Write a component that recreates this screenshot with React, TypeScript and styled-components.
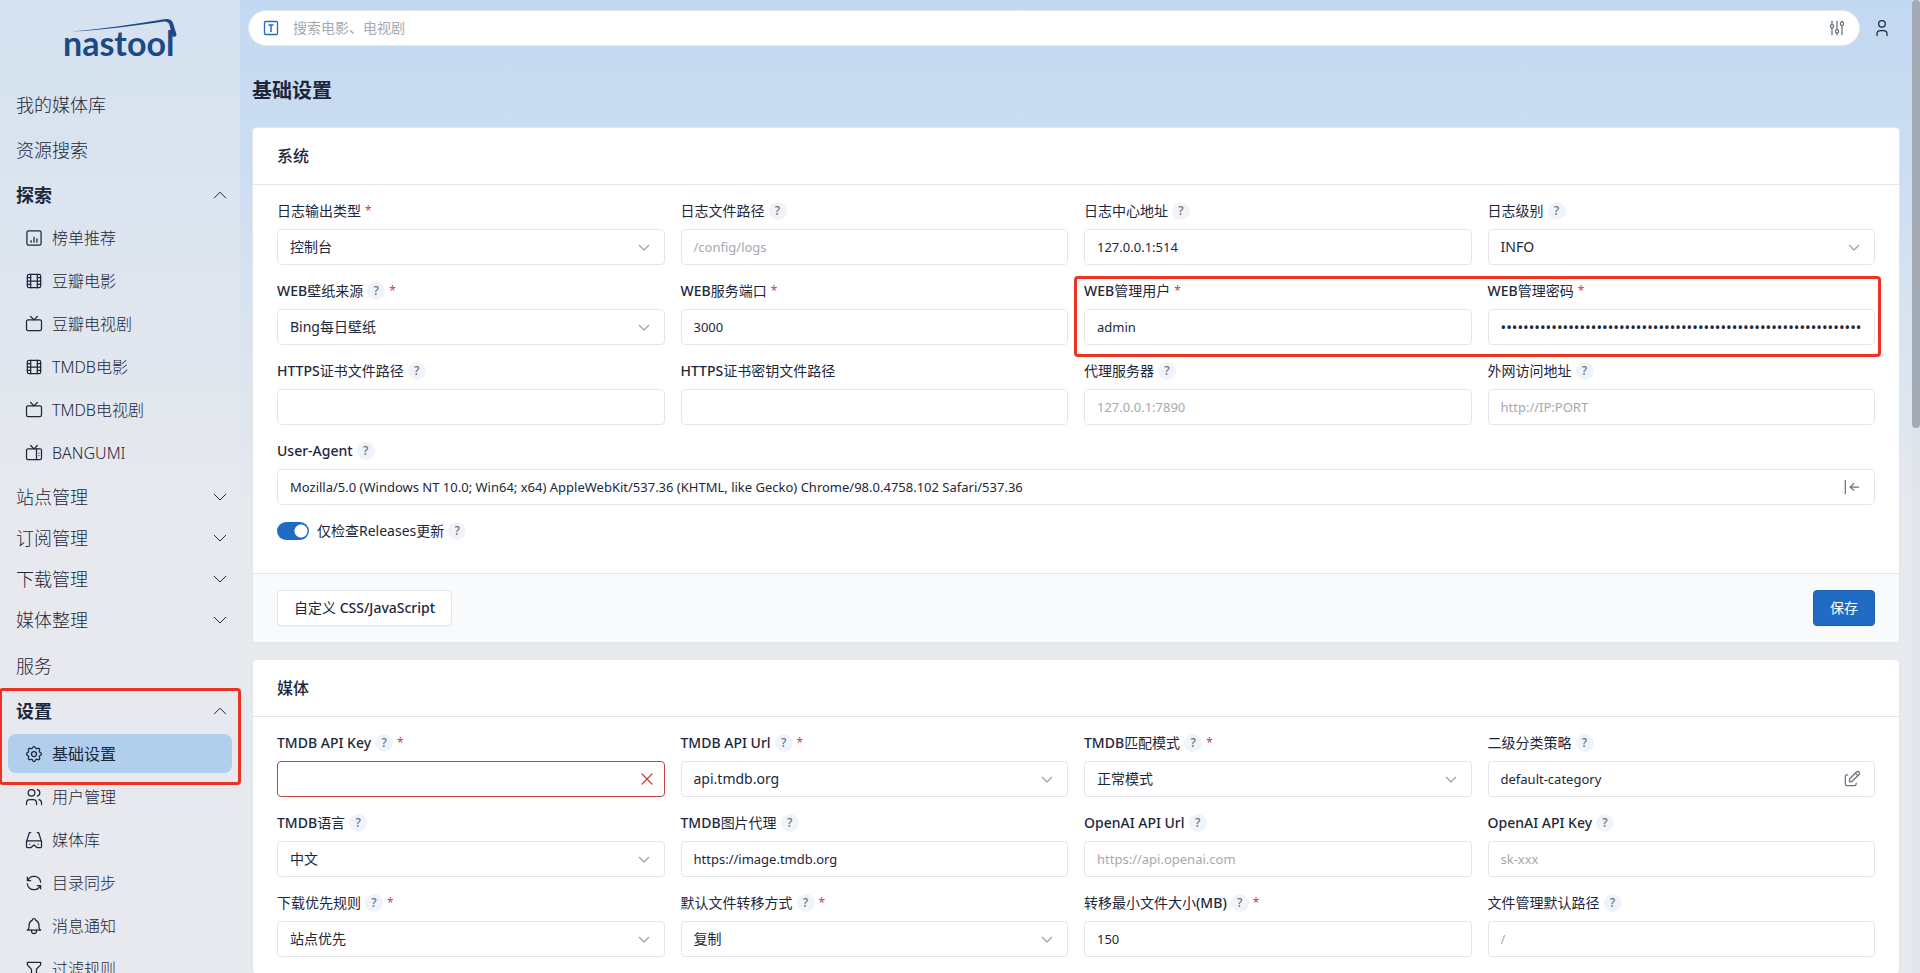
import React from "react";
import styled, { createGlobalStyle, css } from "styled-components";
import type { IconType } from "react-icons";
import {
  TbAdjustments,
  TbArrowBarToLeft,
  TbBell,
  TbDeviceTv,
  TbDeviceTvOld,
  TbEdit,
  TbFilter,
  TbMovie,
  TbRefresh,
  TbSettings,
  TbUser,
  TbUsers,
  TbX,
} from "react-icons/tb";

const color = {
  text: "#1d273b",
  muted: "#667382",
  placeholder: "#a5a9b1",
  border: "#e4e6ea",
  primary: "#206bc4",
  danger: "#c8433f",
  mark: "#ea3323",
};

const GlobalStyle = createGlobalStyle`
  *, *::before, *::after { box-sizing: border-box; }
  body {
    margin: 0;
    color: ${color.text};
    font-family: "Noto Sans", "Noto Sans CJK SC", sans-serif;
    font-size: 14px;
    line-height: 20px;
  }
  button, input, select { font: inherit; color: inherit; }
  h1, h2, ul { margin: 0; padding: 0; }
  ul { list-style: none; }
  a { color: inherit; text-decoration: none; }
`;

const Shell = styled.div`
  display: grid;
  grid-template-columns: 240px minmax(0, 1fr) 8px;
  grid-template-rows: minmax(0, 1fr);
  height: 100vh;
  overflow: hidden;
  background: linear-gradient(180deg, #c2d9f2 0%, #cbddf1 15%, #e6e9ee 52%);
`;

/* Sidebar */

const Sidebar = styled.aside`
  position: relative;
  z-index: 1;
  background: rgba(231, 234, 238, 0.5);
`;

const Brand = styled.a`
  display: flex;
  justify-content: center;
  height: 82px;
  padding-top: 16px;
`;

const Nav = styled.nav`
  display: flex;
  flex-direction: column;
`;

const rowBase = css`
  display: flex;
  align-items: center;
  width: 100%;
  border: 0;
  background: none;
  text-align: left;
`;

const TopLink = styled.a`
  ${rowBase}
  height: 45px;
  padding: 0 16px;
  font-size: 18px;
  font-weight: 300;
`;

const GroupButton = styled.button<{ $open?: boolean }>`
  ${rowBase}
  justify-content: space-between;
  height: ${(p) => (p.$open ? 45 : 41)}px;
  padding: 0 13px 0 16px;
  font-size: 18px;
  font-weight: ${(p) => (p.$open ? 700 : 300)};
`;

const ClosedGroups = styled.div`
  padding: 1px 0 3px;
`;

const SubList = styled.ul`
  display: flex;
  flex-direction: column;
  gap: 4px;
  padding: 1px 8px 3px;
`;

const SubLink = styled.a<{ $active?: boolean }>`
  display: flex;
  align-items: center;
  gap: 8px;
  height: 39px;
  padding: 0 16px;
  border-radius: 8px;
  font-size: 16px;
  font-weight: ${(p) => (p.$active ? 400 : 300)};
  background: ${(p) => (p.$active ? "#b1cfec" : "transparent")};
`;

const OpenGroup = styled.section`
  position: relative;
`;

const Mark = styled.div<{ $box: string; $height?: string }>`
  position: absolute;
  inset: ${(p) => p.$box};
  height: ${(p) => p.$height ?? "auto"};
  border: 3px solid ${color.mark};
  border-radius: 4px;
  pointer-events: none;
`;

/* Main column */

const Main = styled.main`
  min-width: 0;
  overflow-y: auto;
  scrollbar-width: none;
`;

const TopBar = styled.header`
  display: flex;
  align-items: center;
  gap: 12px;
  padding: 10px 20px 0 8px;
`;

const SearchBox = styled.label`
  display: flex;
  flex: 1;
  align-items: center;
  gap: 12px;
  height: 36px;
  padding: 0 12px;
  border: 1px solid ${color.border};
  border-radius: 18px;
  background: #fff;
`;

const SearchInput = styled.input`
  flex: 1;
  min-width: 0;
  padding: 0;
  border: 0;
  outline: 0;
  background: none;
  &::placeholder { color: ${color.placeholder}; opacity: 1; }
`;

const IconButton = styled.button`
  display: flex;
  padding: 0;
  border: 0;
  background: none;
  color: ${(p) => p.color ?? color.text};
`;

const PageTitle = styled.h1`
  padding: 31px 12px 22px;
  font-size: 20px;
  line-height: 28px;
  font-weight: 700;
`;

const Cards = styled.div`
  display: flex;
  flex-direction: column;
  gap: 16px;
  padding: 0 12px 16px;
`;

const Card = styled.form`
  border: 1px solid ${color.border};
  border-radius: 4px;
  background: #fff;
`;

const CardTitle = styled.h2`
  padding: 16px 24px;
  border-bottom: 1px solid ${color.border};
  font-size: 16px;
  line-height: 24px;
  font-weight: 500;
`;

const CardBody = styled.div`
  display: grid;
  grid-template-columns: repeat(4, minmax(0, 1fr));
  gap: 16px;
  padding: 16px 24px;
`;

const Pair = styled.div`
  position: relative;
  display: grid;
  grid-column: span 2;
  grid-template-columns: subgrid;
`;

const CardFooter = styled.div`
  display: flex;
  justify-content: space-between;
  margin-top: 16px;
  padding: 16px 24px;
  border-top: 1px solid ${color.border};
  border-radius: 0 0 4px 4px;
  background: #f8fafc;
`;

const Button = styled.button<{ $primary?: boolean }>`
  height: 36px;
  padding: 0 16px;
  border: 1px solid ${(p) => (p.$primary ? "#1c60b0" : color.border)};
  border-radius: 4px;
  background: ${(p) => (p.$primary ? color.primary : "#fff")};
  color: ${(p) => (p.$primary ? "#fff" : color.text)};
  box-shadow: 0 1px 0 rgba(29, 39, 59, 0.04);
`;

const FieldBox = styled.div<{ $wide?: boolean }>`
  grid-column: ${(p) => (p.$wide ? "1 / -1" : "auto")};
  min-width: 0;
`;

const LabelRow = styled.div`
  display: flex;
  align-items: center;
  height: 20px;
  margin-bottom: 8px;
`;

const Medium = styled.span`
  font-weight: 500;
`;

const Help = styled.span`
  width: 18px;
  height: 18px;
  margin-left: 4px;
  border-radius: 50%;
  background: #f0f4f9;
  color: ${color.muted};
  font-size: 12px;
  line-height: 18px;
  font-weight: 500;
  text-align: center;
`;

const Star = styled.span`
  margin-left: 4px;
  color: ${color.danger};
  font-size: 12px;
  line-height: 18px;
`;

const Control = styled.div`
  position: relative;
`;

const controlStyle = css<{ $invalid?: boolean }>`
  display: block;
  width: 100%;
  height: 36px;
  padding: 0 12px;
  border: 1px solid ${(p) => (p.$invalid ? color.danger : color.border)};
  border-radius: 4px;
  outline: 0;
  background: #fff;
`;

const TextInput = styled.input<{ $invalid?: boolean }>`
  ${controlStyle}
  font-size: ${(p) => (p.type === "password" ? 15 : 13)}px;
  &::placeholder { color: ${color.placeholder}; opacity: 1; }
`;

const Select = styled.select<{ $invalid?: boolean }>`
  ${controlStyle}
  appearance: none;
`;

const Trailing = styled.span`
  position: absolute;
  top: 0;
  right: 13px;
  display: flex;
  align-items: center;
  height: 36px;
  pointer-events: none;
`;

const InvalidMark = styled(Trailing)`
  right: 8px;
`;

const SwitchRow = styled.div`
  display: flex;
  grid-column: 1 / -1;
  align-items: center;
  height: 20px;
`;

const Switch = styled.input`
  width: 32px;
  height: 18px;
  margin: 0 8px 0 0;
  border-radius: 9px;
  appearance: none;
  background: radial-gradient(circle at 24px 9px, #fff 6px, ${color.primary} 7px);
`;

const Track = styled.div`
  background: rgba(220, 224, 230, 0.4);
`;

const Thumb = styled.div`
  height: 44%;
  border-radius: 4px;
  background: #a3abb7;
`;

/* Drawings */

const Logo = () => (
  <svg width="116" height="48" viewBox="0 0 116 48" role="img" aria-label="nastool">
    <path
      d="M9 15.6C40 13 75 8 102 3.2Q109 2 111 7L114.5 18.5Q114.500 21.500 110.500 20.500L107.500 9Q106.500 5.200 102 5.400C75 9.500 40 14 9 15.600Z"
      fill="#1b4a86"
    />
    <text x="1" y="40" fontFamily="Lato" fontWeight="700" fontSize="34" fill="#1b4a86">
      nastool
    </text>
  </svg>
);

const GroupChevron = ({ open }: { open?: boolean }) => (
  <svg width="14" height="8" viewBox="0 0 14 8" fill="none" stroke={color.text} strokeWidth="1">
    <path d={open ? "M1 7.2 7 1.2l6 6" : "M1 1l6 6 6-6"} />
  </svg>
);

const SelectChevron = () => (
  <svg width="16" height="16" viewBox="0 0 16 16" fill="none" stroke="#a5a9b1" strokeWidth="1.5">
    <path d="M3 6l5 5 5-5" />
  </svg>
);

const ChartSquare: IconType = ({ size = 20 }) => (
  <svg
    width={size}
    height={size}
    viewBox="0 0 24 24"
    fill="none"
    stroke="currentColor"
    strokeWidth="1.5"
    strokeLinecap="round"
  >
    <rect x="3.5" y="3.5" width="17" height="17" rx="2" />
    <path d="M8.5 15v2M12 11v6M15.5 13v4" />
  </svg>
);

const StereoGlasses: IconType = ({ size = 20 }) => (
  <svg
    width={size}
    height={size}
    viewBox="0 0 24 24"
    fill="none"
    stroke="currentColor"
    strokeWidth="1.5"
    strokeLinecap="round"
    strokeLinejoin="round"
  >
    <path d="M8 3H6.500L3 14M16 3h1.500L21 14" />
    <path d="M3 14v6a1 1 0 0 0 1 1h4.500L12 18l3.500 3H20a1 1 0 0 0 1-1v-6a1 1 0 0 0-1-1H4a1 1 0 0 0-1 1Z" />
    <path d="M7 17h.01M17 17h.01" />
  </svg>
);

const LetterSquare = () => (
  <svg width="20" height="20" viewBox="0 0 20 20" fill="none" stroke={color.primary}>
    <rect x="3.500" y="3.500" width="13" height="13" rx="1" strokeWidth="1.3" />
    <path d="M7.500 7h5M10 7v7" strokeWidth="1.5" />
  </svg>
);

/* Data */

type SubItem = [string, IconType];

const explore: SubItem[] = [
  ["榜单推荐", ChartSquare],
  ["豆瓣电影", TbMovie],
  ["豆瓣电视剧", TbDeviceTv],
  ["TMDB电影", TbMovie],
  ["TMDB电视剧", TbDeviceTv],
  ["BANGUMI", TbDeviceTvOld],
];

const settings: SubItem[] = [
  ["基础设置", TbSettings],
  ["用户管理", TbUsers],
  ["媒体库", StereoGlasses],
  ["目录同步", TbRefresh],
  ["消息通知", TbBell],
  ["过滤规则", TbFilter],
];

const closedGroups = ["站点管理", "订阅管理", "下载管理", "媒体整理"];

/* Latin words are set in medium weight, Chinese characters in regular. */
const Label = ({ text }: { text: string }) => (
  <>
    {text
      .split(/([\x20-\x7e]+)/)
      .filter(Boolean)
      .map((part, i) => (/^[\x20-\x7e]/.test(part) ? <Medium key={i}>{part}</Medium> : part))}
  </>
);

interface FieldProps {
  id: string;
  label: string;
  help?: boolean;
  required?: boolean;
  select?: boolean;
  value?: string;
  placeholder?: string;
  type?: string;
  wide?: boolean;
  invalid?: boolean;
  icon?: React.ReactNode;
}

const Field = (p: FieldProps) => (
  <FieldBox $wide={p.wide}>
    <LabelRow>
      <label htmlFor={p.id}>
        <Label text={p.label} />
      </label>
      {p.help && <Help>?</Help>}
      {p.required && <Star>*</Star>}
    </LabelRow>
    <Control>
      {p.select ? (
        <Select id={p.id}>
          <option>{p.value}</option>
        </Select>
      ) : (
        <TextInput
          id={p.id}
          type={p.type ?? "text"}
          defaultValue={p.value}
          placeholder={p.placeholder}
          autoComplete="off"
          $invalid={p.invalid}
        />
      )}
      {p.select && (
        <Trailing>
          <SelectChevron />
        </Trailing>
      )}
      {p.icon && <Trailing>{p.icon}</Trailing>}
      {p.invalid && (
        <InvalidMark>
          <TbX size={20} strokeWidth={1.5} color={color.danger} />
        </InvalidMark>
      )}
    </Control>
  </FieldBox>
);

const SubItems = ({ items, active }: { items: SubItem[]; active?: string }) => (
  <SubList>
    {items.map(([name, Icon]) => (
      <li key={name}>
        <SubLink href="#" $active={name === active}>
          <Icon size={20} strokeWidth={1.5} />
          {name}
        </SubLink>
      </li>
    ))}
  </SubList>
);

export default function App() {
  return (
    <>
      <GlobalStyle />
      <Shell>
        <Sidebar>
          <Brand href="#">
            <Logo />
          </Brand>
          <Nav>
            <TopLink href="#">我的媒体库</TopLink>
            <TopLink href="#">资源搜索</TopLink>
            <OpenGroup>
              <GroupButton $open>
                探索
                <GroupChevron open />
              </GroupButton>
              <SubItems items={explore} />
            </OpenGroup>
            <ClosedGroups>
              {closedGroups.map((name) => (
                <GroupButton key={name}>
                  {name}
                  <GroupChevron />
                </GroupButton>
              ))}
            </ClosedGroups>
            <TopLink href="#">服务</TopLink>
            <OpenGroup>
              <GroupButton $open>
                设置
                <GroupChevron open />
              </GroupButton>
              <SubItems items={settings} active="基础设置" />
              <Mark $box="0 -1px auto -1px" $height="97px" />
            </OpenGroup>
          </Nav>
        </Sidebar>

        <Main>
          <TopBar>
            <SearchBox>
              <LetterSquare />
              <SearchInput type="text" placeholder="搜索电影、电视剧" aria-label="搜索电影、电视剧" />
              <IconButton type="button" aria-label="筛选" color={color.muted}>
                <TbAdjustments size={20} strokeWidth={1.5} />
              </IconButton>
            </SearchBox>
            <IconButton type="button" aria-label="用户">
              <TbUser size={20} strokeWidth={1.5} />
            </IconButton>
          </TopBar>
          <PageTitle>基础设置</PageTitle>
          <Cards>
            <Card>
              <CardTitle>系统</CardTitle>
              <CardBody>
                <Field id="log-type" label="日志输出类型" required select value="控制台" />
                <Field id="log-path" label="日志文件路径" help placeholder="/config/logs" />
                <Field id="log-server" label="日志中心地址" help value="127.0.0.1:514" />
                <Field id="log-level" label="日志级别" help select value="INFO" />
                <Field id="wallpaper" label="WEB壁纸来源" help required select value="Bing每日壁纸" />
                <Field id="web-port" label="WEB服务端口" required value="3000" />
                <Pair>
                  <Field id="web-user" label="WEB管理用户" required value="admin" />
                  <Field
                    id="web-password"
                    label="WEB管理密码"
                    required
                    type="password"
                    value={"p".repeat(94)}
                  />
                  <Mark $box="-5px -6px -12px -10px" />
                </Pair>
                <Field id="ssl-cert" label="HTTPS证书文件路径" help />
                <Field id="ssl-key" label="HTTPS证书密钥文件路径" />
                <Field id="proxy" label="代理服务器" help placeholder="127.0.0.1:7890" />
                <Field id="domain" label="外网访问地址" help placeholder="http://IP:PORT" />
                <Field
                  id="user-agent"
                  label="User-Agent"
                  help
                  wide
                  value="Mozilla/5.0 (Windows NT 10.0; Win64; x64) AppleWebKit/537.36 (KHTML, like Gecko) Chrome/98.0.4758.102 Safari/537.36"
                  icon={<TbArrowBarToLeft size={20} strokeWidth={1.5} color={color.muted} />}
                />
                <SwitchRow>
                  <Switch id="releases" type="checkbox" defaultChecked />
                  <label htmlFor="releases">仅检查Releases更新</label>
                  <Help>?</Help>
                </SwitchRow>
              </CardBody>
              <CardFooter>
                <Button type="button">
                  <Label text="自定义 CSS/JavaScript" />
                </Button>
                <Button type="button" $primary>
                  保存
                </Button>
              </CardFooter>
            </Card>

            <Card>
              <CardTitle>媒体</CardTitle>
              <CardBody>
                <Field id="tmdb-key" label="TMDB API Key" help required invalid />
                <Field id="tmdb-url" label="TMDB API Url" help required select value="api.tmdb.org" />
                <Field id="tmdb-match" label="TMDB匹配模式" help required select value="正常模式" />
                <Field
                  id="category"
                  label="二级分类策略"
                  help
                  value="default-category"
                  icon={<TbEdit size={20} strokeWidth={1.5} color={color.muted} />}
                />
                <Field id="tmdb-lang" label="TMDB语言" help select value="中文" />
                <Field id="tmdb-image" label="TMDB图片代理" help value="https://image.tmdb.org" />
                <Field id="openai-url" label="OpenAI API Url" help placeholder="https://api.openai.com" />
                <Field id="openai-key" label="OpenAI API Key" help placeholder="sk-xxx" />
                <Field id="priority" label="下载优先规则" help required select value="站点优先" />
                <Field id="transfer" label="默认文件转移方式" help required select value="复制" />
                <Field id="min-size" label="转移最小文件大小(MB)" help required value="150" />
                <Field id="default-path" label="文件管理默认路径" help placeholder="/" />
              </CardBody>
            </Card>
          </Cards>
        </Main>
        <Track>
          <Thumb />
        </Track>
      </Shell>
    </>
  );
}
